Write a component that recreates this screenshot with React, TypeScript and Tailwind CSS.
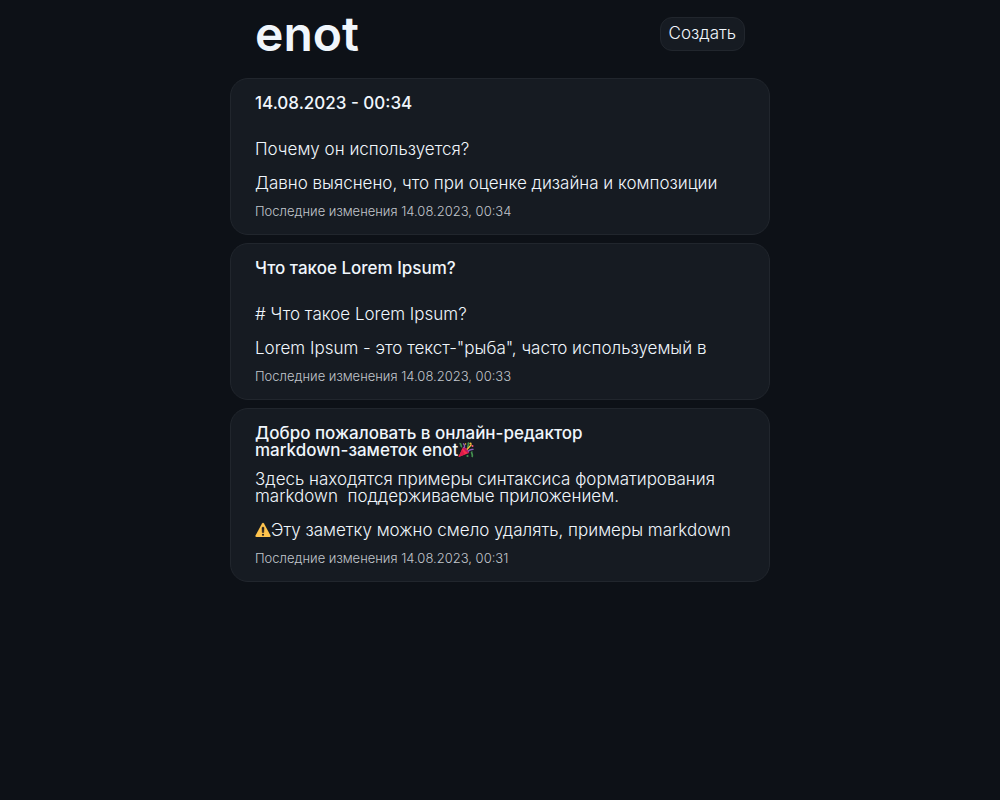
import type { ReactNode } from "react";

function PartyPopper() {
  return (
    <svg viewBox="0 0 32 32" className="inline-block size-4 align-top" role="img" aria-label="party popper">
      <path d="M1 30 10 10C16 11 21 16 22 22Z" fill="#f8314b" />
      <path d="M1 30 8 15 14 25Z" fill="#dc1b4c" />
      <path d="M10 10C13 8 24 19 22 22C19 24 8 13 10 10Z" fill="#c2185b" />
      <path d="M11 12C15 9 13 5 10 3M20 19C24 14 28 16 31 14" fill="none" stroke="#8b62b8" strokeWidth="3" />
      <path d="M3 3C8 3 4 8 8 10M29 20C24 20 31 24 28 30M20 1C23 5 18 8 20 12" fill="none" stroke="#44914f" strokeWidth="3.4" />
      <path d="M18 15 27 5" stroke="#f9c23c" strokeWidth="2.6" />
      <circle cx="25" cy="3" r="2.2" fill="#f9c23c" />
      <circle cx="29" cy="8" r="2" fill="#f8557b" />
      <circle cx="19" cy="28" r="2.2" fill="#44914f" />
      <circle cx="15" cy="4" r="1.6" fill="#f9c23c" />
    </svg>
  );
}

function Warning() {
  return (
    <svg viewBox="0 0 32 32" className="inline-block size-4 align-top" role="img" aria-label="warning">
      <path d="M14 3Q16 0 18 3L31 27Q32 30 29 30H3Q0 30 1 27Z" fill="#ffc44d" />
      <path d="M14 11Q16 9 18 11L17.5 21H14.5Z" fill="#231f20" stroke="#231f20" />
      <circle cx="16" cy="25.5" r="2.2" fill="#231f20" />
    </svg>
  );
}

type Note = { title: ReactNode; body: ReactNode; changed: string };

const notes: Note[] = [
  {
    title: "14.08.2023 - 00:34",
    body: "Почему он используется?\n\nДавно выяснено, что при оценке дизайна и композиции",
    changed: "14.08.2023, 00:34",
  },
  {
    title: "Что такое Lorem Ipsum?",
    body: '# Что такое Lorem Ipsum?\n\nLorem Ipsum - это текст-"рыба", часто используемый в',
    changed: "14.08.2023, 00:33",
  },
  {
    title: (
      <>
        {"Добро пожаловать в онлайн-редактор\nmarkdown-заметок enot"}
        <PartyPopper />
      </>
    ),
    body: (
      <>
        {"Здесь находятся примеры синтаксиса форматирования\nmarkdown  поддерживаемые приложением.\n\n"}
        <Warning />
        {"Эту заметку можно смело удалять, примеры markdown"}
      </>
    ),
    changed: "14.08.2023, 00:31",
  },
];

export default function App() {
  return (
    <div className="min-h-screen bg-[#0d1117] font-['Inter','Liberation_Sans',sans-serif] text-[#f0f6fc]">
      <div className="mx-auto max-w-[540px]">
        <header className="flex items-center justify-between px-[25px] pt-1 pb-[14px]">
          <h1 className="text-[48px] leading-[60px] font-semibold">enot</h1>
          <button type="button" className="h-[34px] rounded-xl border border-[#21262d] bg-[#161b22] px-2 text-[17px] font-light">
            Создать
          </button>
        </header>
        <main className="flex flex-col gap-2">
          {notes.map((note) => (
            <article key={note.changed} className="rounded-[18px] border border-[#21262d] bg-[#161b22] px-6 py-4">
              <h2 className="min-h-[34px] text-[17px] leading-[17px] font-medium whitespace-pre-wrap">{note.title}</h2>
              <p className="mt-3 text-[17px] leading-[17px] font-light whitespace-pre-wrap">{note.body}</p>
              <p className="mt-3 text-[13px] leading-[14px] font-light text-[#c1c6cc]">Последние изменения {note.changed}</p>
            </article>
          ))}
        </main>
      </div>
    </div>
  );
}
